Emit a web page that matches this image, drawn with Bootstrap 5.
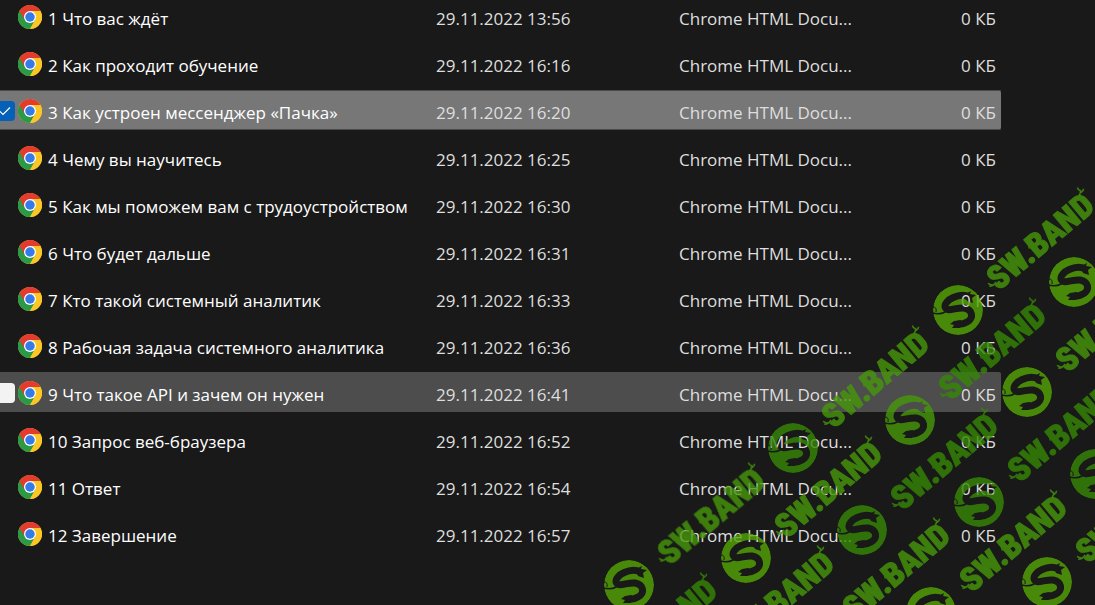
<!DOCTYPE html>
<html lang="ru">
<head>
<meta charset="utf-8">
<meta name="viewport" content="width=device-width, initial-scale=1">
<title>Файлы</title>
<link href="https://cdn.jsdelivr.net/npm/bootstrap@5.3.0/dist/css/bootstrap.min.css" rel="stylesheet">
<style>
  body {
    background: #191919;
    color: #fff;
    font-family: "Open Sans", "Noto Sans", sans-serif;
    font-size: 17px;
    line-height: 24px;
  }
  .file-pane { display: flow-root; min-height: 100vh; padding-right: 94px; }
  .file-list {
    width: 100%;
    table-layout: fixed;
    border-collapse: separate;
    border-spacing: 0 7px;
    margin-top: -11px;
  }
  .file-list td { height: 40px; padding: 6px 0 0; color: #dedede; white-space: nowrap; vertical-align: middle; }
  .file-list td:last-child { padding-right: 5px; border-radius: 0 2px 2px 0; }
  .col-title { width: 436px; }
  .col-date, .col-type { width: 243px; }
  .file-list .is-selected td { background: #777; box-shadow: inset 0 1px #4a4a4a, inset 0 -1px #4a4a4a; }
  .file-list .is-hovered td { background: #4d4d4d; }
  .tick-slot { width: 18px; height: 20px; }
  .tick-slot .form-check-input {
    width: 20px; height: 20px; margin: -2px 0 0 -5px;
    border: 0; border-radius: 4px; background-color: #f3f3f3;
  }
  .tick-slot .form-check-input:checked {
    background-color: #0560b8;
    background-image: url("data:image/svg+xml,%3Csvg xmlns='http://www.w3.org/2000/svg' viewBox='0 0 20 20'%3E%3Cpath fill='none' stroke='%23fff' stroke-width='1.2' d='M4.500 10l3.500 3.500 7-7'/%3E%3C/svg%3E");
  }
  .file-icon { width: 24px; height: 24px; margin: -4px 6px 0 0; }
  .file-title { color: #fff; text-decoration: none; }
  .stamp-layer { top: 0; right: 0; pointer-events: none; }
  .stamp-layer text { font: 900 33px "Roboto Condensed", "Roboto", sans-serif; text-anchor: middle; }
</style>
</head>
<body class="overflow-hidden">
<svg class="d-none" aria-hidden="true">
  <symbol id="chrome" viewBox="0 0 48 48">
    <circle cx="24" cy="24" r="24" fill="#fcc624"/>
    <path fill="#2a9a46" d="M24 24 3.200 12A24 24 0 0 0 24 48L34.400 30Z"/>
    <path fill="#e33b2e" d="M24 24 13.600 30 3.200 12A24 24 0 0 1 44.800 12H24Z"/>
    <path fill="#fcc624" d="M24 12H44.800A24 24 0 0 1 24 48L34.400 30Z"/>
    <circle cx="24" cy="24" r="12" fill="#fff"/>
    <circle cx="24" cy="24" r="9.500" fill="#347be9"/>
  </symbol>
</svg>

<main class="file-pane position-relative">
  <table class="file-list">
    <colgroup><col class="col-title"><col class="col-date"><col class="col-type"><col></colgroup>
    <tbody id="files"></tbody>
  </table>
  <svg class="stamp-layer position-absolute" width="1095" height="605" viewBox="0 0 1095 605" aria-hidden="true">
    <defs>
      <mask id="cut" maskUnits="userSpaceOnUse" x="-26" y="-26" width="52" height="52">
        <circle r="25" fill="#fff"/>
        <path d="M11-13C2-18-14-10-13-3C-11 3-2-3 6-2C15 0 16 8 9 12Q4 15-1 14" fill="none" stroke="#000" stroke-width="7"/>
        <path d="M7-16 13-19 12-16 18-15 14-12 15-7 9-9ZM3 10-4 11-8 14-4 15-6 18 2 18Z" fill="#000"/>
        <path d="M-26 3Q-18 5-13 2T0-1" fill="none" stroke="#000" stroke-width="1.500"/>
        <path d="M-25-3q4 0 3 5" fill="none" stroke="#000" stroke-width="1"/>
      </mask>
      <g id="seal"><circle r="25" mask="url(#cut)"/></g>
      <g id="twigs" fill="none" stroke="currentColor" stroke-width="1.500">
        <path d="M-60 3q-4 2-8-1m4 2q-3-3-3-5"/>
        <path d="M57-9q5-1 7-4m-2 2q3 1 5-1m-4-1q-1-2 0-4"/>
        <path d="M-13-1q3-5 3-10m-1 7q3-1 4-4"/>
      </g>
    </defs>
    <g id="stamps" opacity=".8"></g>
  </svg>
</main>

<script src="https://cdn.jsdelivr.net/npm/bootstrap@5.3.0/dist/js/bootstrap.bundle.min.js"></script>
<script>
  const files = [
    ["1 Что вас ждёт", "13:56"],
    ["2 Как проходит обучение", "16:16"],
    ["3 Как устроен мессенджер «Пачка»", "16:20", "is-selected"],
    ["4 Чему вы научитесь", "16:25"],
    ["5 Как мы поможем вам с трудоустройством", "16:30"],
    ["6 Что будет дальше", "16:31"],
    ["7 Кто такой системный аналитик", "16:33"],
    ["8 Рабочая задача системного аналитика", "16:36"],
    ["9 Что такое API и зачем он нужен", "16:41", "is-hovered"],
    ["10 Запрос веб-браузера", "16:52"],
    ["11 Ответ", "16:54"],
    ["12 Завершение", "16:57"]
  ];
  document.getElementById("files").innerHTML = files.map(([title, time, state = ""]) => `
    <tr class="${state}">
      <td><div class="d-flex align-items-center">
        <span class="tick-slot flex-shrink-0 d-flex">${state ? `<input class="form-check-input flex-shrink-0" type="checkbox" aria-label="${title}" ${state === "is-selected" ? "checked" : ""}>` : ""}</span>
        <svg class="file-icon flex-shrink-0" aria-hidden="true"><use href="#chrome"/></svg>
        <a class="file-title" href="#">${title}</a>
      </div></td>
      <td>29.11.2022 ${time}</td>
      <td>Chrome HTML Docu...</td>
      <td class="text-end">0 КБ</td>
    </tr>`).join("");

  const bright = "#56a605", mid = "#47980b", dark = "#368805";
  const seals = [
    [958, 310, bright], [1074, 282, bright], [1027, 392, bright], [910, 420, mid],
    [793, 448, dark], [1095, 474, dark], [979, 502, dark], [862, 530, dark],
    [746, 558, bright], [629, 585, bright], [1047, 582, bright], [931, 612, bright]
  ];
  const words = [
    [1040, 241, mid], [992, 351, dark], [1109, 323, mid], [875, 379, mid],
    [1061, 433, dark], [944, 461, dark], [828, 489, mid], [711, 516, mid],
    [1129, 514, mid], [1013, 543, mid], [896, 571, mid], [780, 599, mid], [663, 626, dark]
  ];
  document.getElementById("stamps").innerHTML =
    seals.map(([x, y, c]) => `<use href="#seal" transform="translate(${x} ${y})" fill="${c}"/>`).join("") +
    words.map(([x, y, c]) => `<g transform="translate(${x} ${y}) rotate(-40)" fill="${c}" color="${c}"><text y="12" stroke="${c}" stroke-width="1">SW.BAND</text><use href="#twigs"/></g>`).join("");
</script>
</body>
</html>
